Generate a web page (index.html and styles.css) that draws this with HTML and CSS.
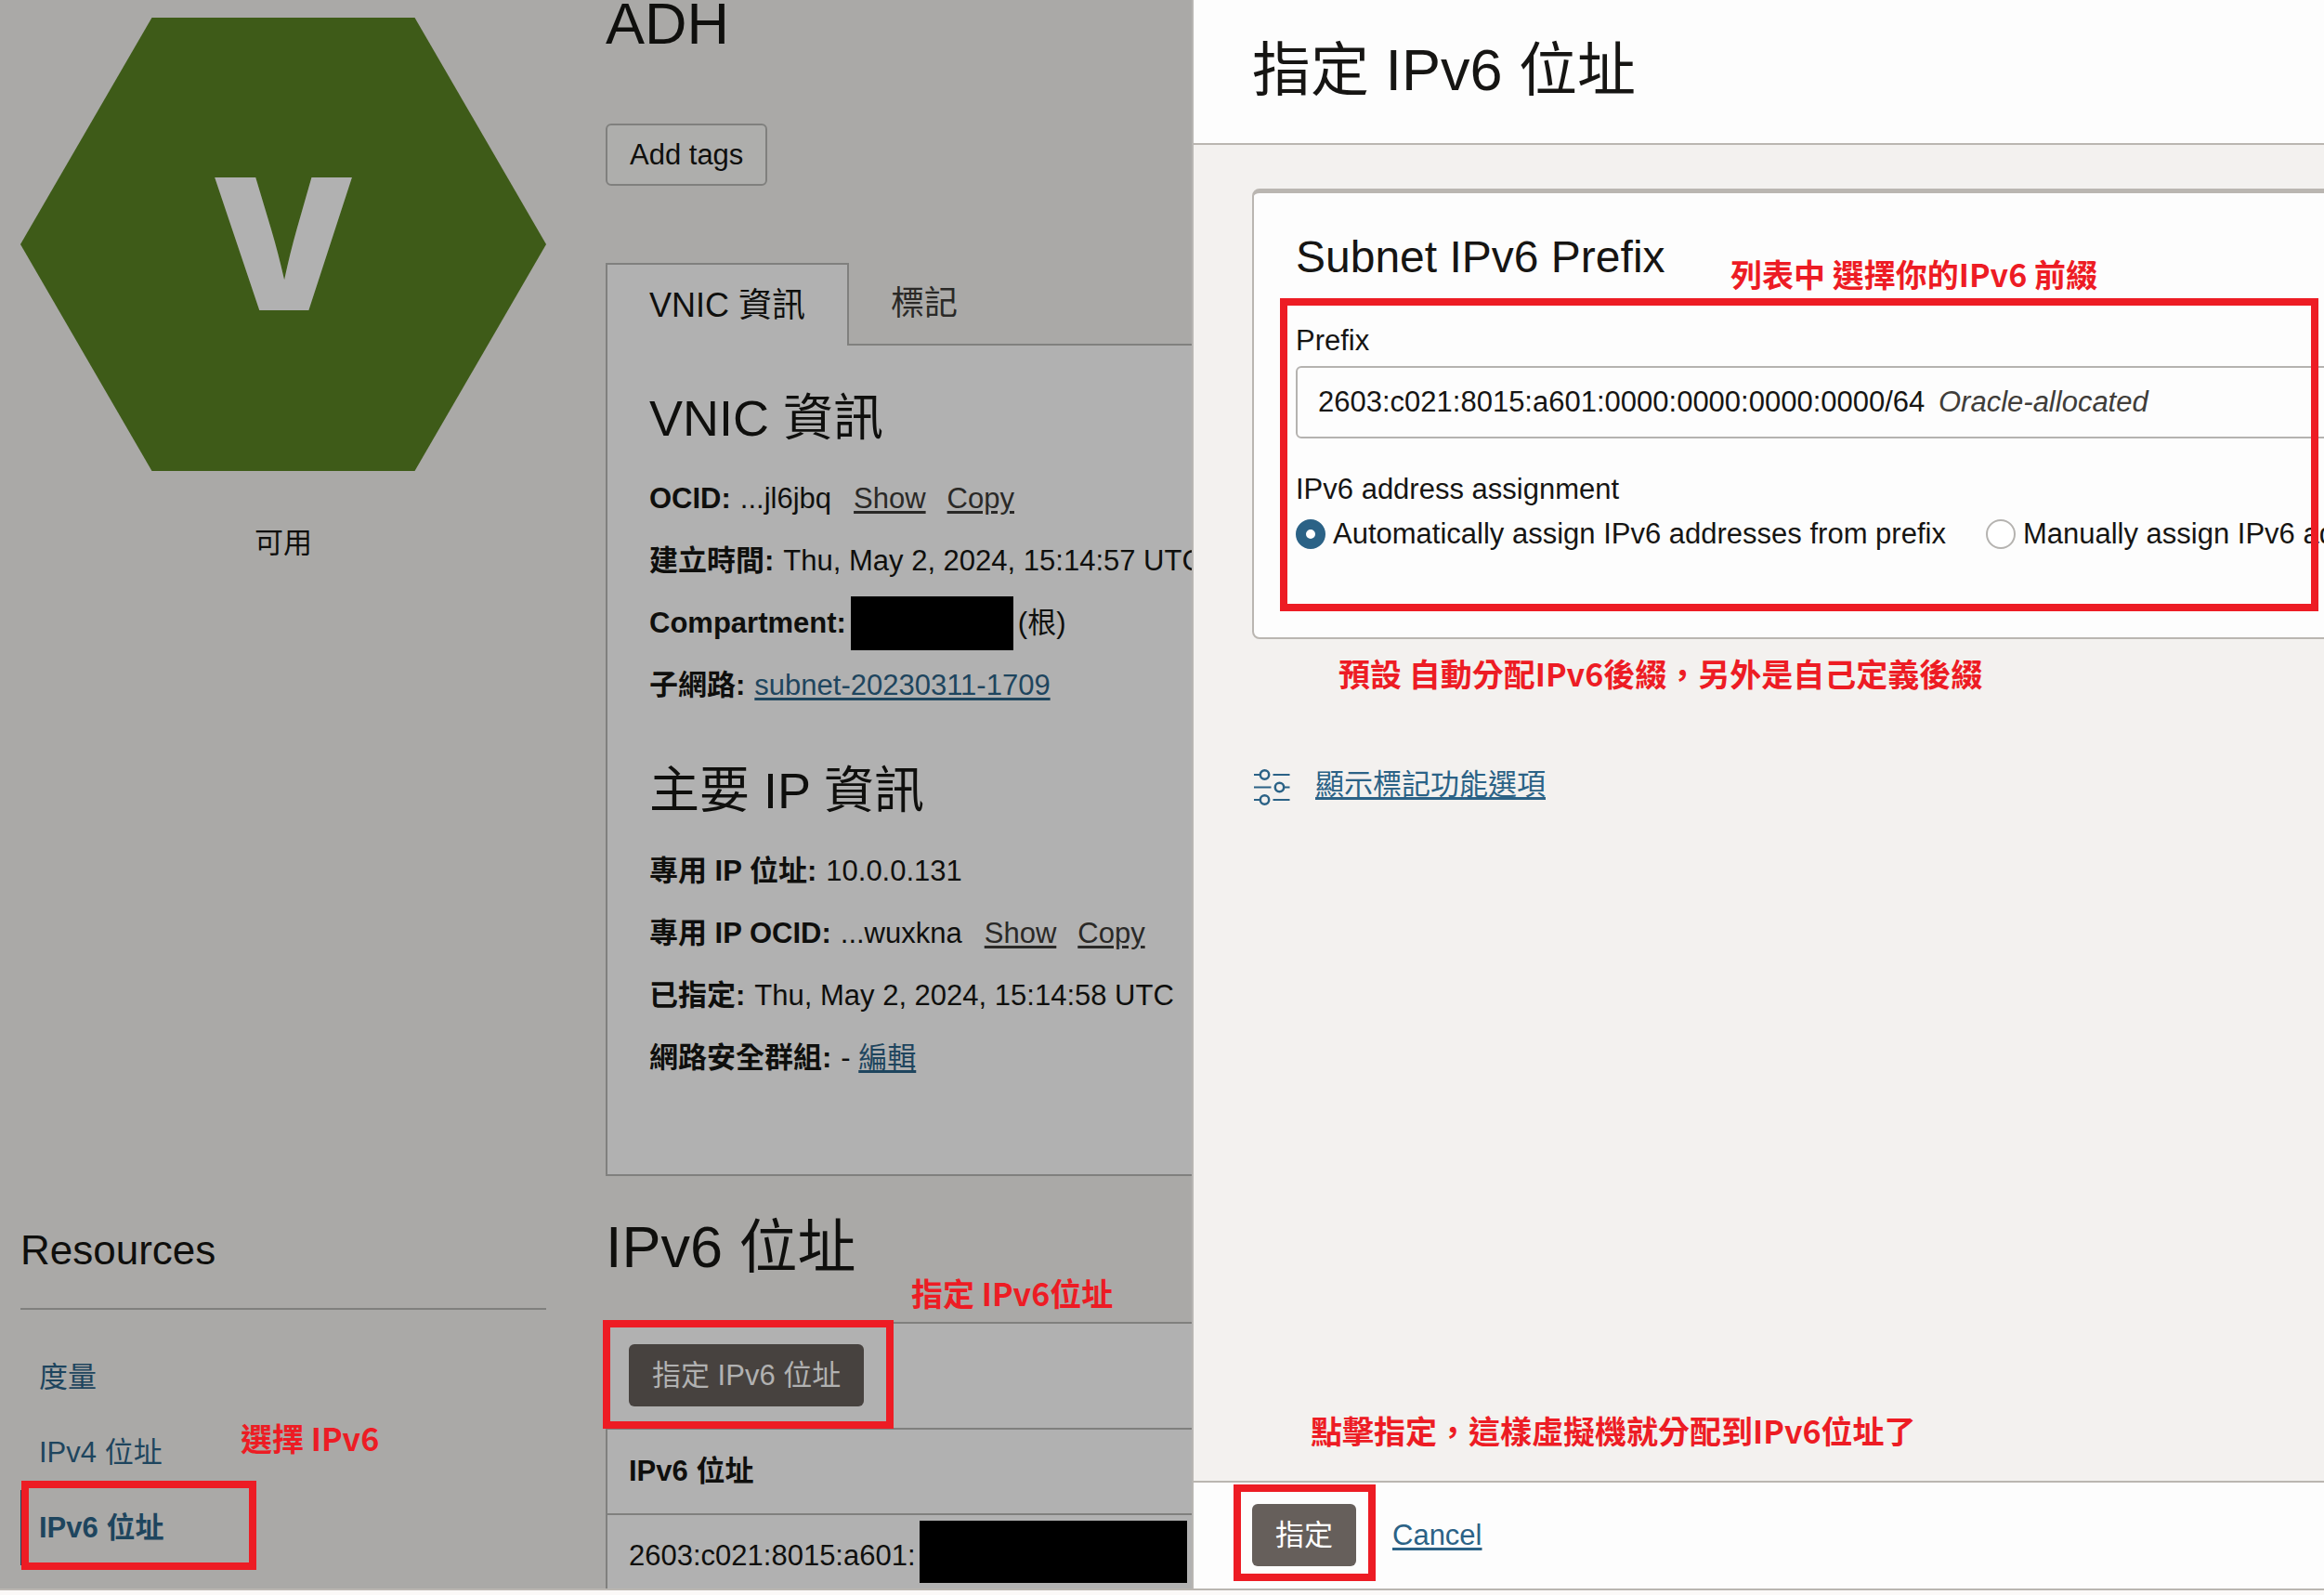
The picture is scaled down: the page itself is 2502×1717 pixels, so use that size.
FILE: index.html
```html
<!DOCTYPE html>
<html lang="zh-Hant">
    <head>
        <meta charset="utf-8">
        <title>指定 IPv6 位址</title>
        <link rel="stylesheet" href="styles.css">
    </head>
    <body>
        <div class="screen">
            <div class="page">
                <aside class="sidebar">
                    <div class="status-icon">V</div>
                    <p class="status-text">可用</p>
                    <h2 class="resources-title">Resources</h2>
                    <nav class="resources">
                        <a href="#metrics">度量</a>
                        <a href="#ipv4">IPv4 位址
                            <span class="note note-side">選擇 IPv6</span>
                        </a>
                        <a href="#ipv6" class="active">IPv6 位址
                            <span class="frame frame-side"></span>
                        </a>
                    </nav>
                </aside>

                <main class="content">
                    <h1 class="title">ADH</h1>
                    <button class="btn-outline">Add tags</button>

                    <div class="tabs">
                        <button class="tab tab-active">VNIC 資訊</button>
                        <button class="tab">標記</button>
                        <div class="tabs-rest"></div>
                    </div>
                    <section class="info">
                        <h2>VNIC 資訊</h2>
                        <dl>
                            <div><dt>OCID:</dt><dd>...jl6jbq</dd><dd class="actions"><a href="#show">Show</a><a href="#copy">Copy</a></dd></div>
                            <div><dt>建立時間:</dt><dd>Thu, May 2, 2024, 15:14:57 UTC</dd></div>
                            <div class="compartment"><dt>Compartment:</dt><dd class="redacted"></dd><dd>(根)</dd></div>
                            <div><dt>子網路:</dt><dd><a href="#subnet" class="link">subnet-20230311-1709</a></dd></div>
                        </dl>
                        <h2>主要 IP 資訊</h2>
                        <dl>
                            <div><dt>專用 IP 位址:</dt><dd>10.0.0.131</dd></div>
                            <div><dt>專用 IP OCID:</dt><dd>...wuxkna</dd><dd class="actions"><a href="#show">Show</a><a href="#copy">Copy</a></dd></div>
                            <div><dt>已指定:</dt><dd>Thu, May 2, 2024, 15:14:58 UTC</dd></div>
                            <div><dt>網路安全群組:</dt><dd>- <a href="#nsg" class="link">編輯</a></dd></div>
                        </dl>
                    </section>

                    <h2 class="list-title">IPv6 位址
                        <span class="note note-list">指定 IPv6位址</span>
                    </h2>
                    <div class="list">
                        <div class="list-bar">
                            <button class="btn-dark btn-dimmed">指定 IPv6 位址</button>
                            <span class="frame frame-list"></span>
                        </div>
                        <table>
                            <thead><tr><th>IPv6 位址</th></tr></thead>
                            <tbody><tr><td><div class="address">2603:c021:8015:a601:<span class="redacted"></span></div></td></tr></tbody>
                        </table>
                    </div>
                </main>
            </div>

            <div class="drawer" role="dialog" aria-labelledby="drawer-title">
                <header class="drawer-head">
                    <h1 id="drawer-title">指定 IPv6 位址</h1>
                </header>

                <div class="drawer-body">
                    <section class="card">
                        <h2>Subnet IPv6 Prefix</h2>
                        <label class="label" for="prefix">Prefix</label>
                        <div class="select-box">
                            <select id="prefix">
                                <option>2603:c021:8015:a601:0000:0000:0000:0000/64</option>
                            </select>
                            <em>Oracle-allocated</em>
                        </div>
                        <fieldset>
                            <legend class="label">IPv6 address assignment</legend>
                            <div class="radios">
                                <input type="radio" name="assign" id="auto" checked>
                                <label for="auto">Automatically assign IPv6 addresses from prefix</label>
                                <input type="radio" name="assign" id="manual">
                                <label for="manual">Manually assign IPv6 addresses from prefix</label>
                            </div>
                        </fieldset>
                    </section>
                    <span class="frame frame-prefix"></span>
                    <span class="note note-prefix">列表中 選擇你的IPv6 前綴</span>
                    <span class="note note-default">預設 自動分配IPv6後綴，另外是自己定義後綴</span>

                    <div class="tag-options">
                        <svg width="42" height="40" viewBox="0 0 42 40" fill="none" stroke="currentColor" stroke-width="2.5">
                            <circle cx="13.5" cy="6" r="4.7"/>
                            <circle cx="29.5" cy="19.5" r="4.7"/>
                            <circle cx="13.5" cy="33" r="4.7"/>
                            <path stroke-width="2" d="M2 6h6M22.500 6h18M2 19.500h18.500M35 19.500h5.500M2 33h6M22.500 33h18"/>
                        </svg>
                        <a href="#tags" class="link">顯示標記功能選項</a>
                    </div>
                    <span class="note note-submit">點擊指定，這樣虛擬機就分配到IPv6位址了</span>
                </div>

                <footer class="drawer-foot">
                    <div class="submit">
                        <button class="btn-dark">指定</button>
                        <span class="frame frame-submit"></span>
                    </div>
                    <a href="#cancel" class="link">Cancel</a>
                </footer>
            </div>
        </div>
    </body>
</html>
```
FILE: styles.css
```css
* {
    box-sizing: border-box;
}
body {
    display: flex;
    flex-direction: column;
    height: 100vh;
    margin: 0;
    padding-bottom: 5px;
    overflow: hidden;
    background-color: #fbf9f8;
    color: #161513;
    font-family: "Liberation Sans", "Noto Sans CJK TC", sans-serif;
    font-size: 31px;
    line-height: 36px;
}
h1, h2, p, dl, dd, fieldset {
    margin: 0;
    padding: 0;
    border: 0;
}
h1, h2 {
    font-weight: normal;
}
button, select {
    font: inherit;
    color: inherit;
}
.link {
    color: #2b6286;
    text-decoration: underline;
    text-decoration-thickness: 3px;
    text-underline-offset: 3px;
}
.screen {
    display: grid;
    grid-template-columns: minmax(0, 1283fr) minmax(0, 1219fr);
    flex: 1;
    min-height: 0;
    border-bottom: 2px solid #bab6b1;
}

/* page behind the drawer */
.page {
    display: flex;
    gap: 64px;
    padding-left: 22px;
    overflow: hidden;
    background-color: #aaa9a7;
    color: #0f0f0d;
}
.page .link {
    color: #1e455e;
}
.sidebar {
    flex: none;
    width: 566px;
    padding-top: 19px;
}
.status-icon {
    display: flex;
    align-items: center;
    justify-content: center;
    height: 488px;
    background-color: #3e5b18;
    clip-path: polygon(25% 0, 75% 0, 100% 50%, 75% 100%, 25% 100%, 0 50%);
    color: #b1b1b1;
    font-family: Inter, sans-serif;
    font-size: 197px;
    font-weight: 900;
}
.status-text {
    margin-top: 58px;
    line-height: 40px;
    text-align: center;
}
.resources-title {
    margin-top: 715px;
    padding-bottom: 36px;
    border-bottom: 2px solid #80807e;
    font-size: 44px;
    line-height: 52px;
}
.resources {
    margin-top: 32px;
}
.resources a {
    display: block;
    position: relative;
    padding-left: 20px;
    color: #1e455e;
    line-height: 81px;
    text-decoration: none;
}
.resources .active {
    padding-left: 16px;
    border-left: 4px solid #1e455e;
    font-weight: bold;
}

.content {
    flex: 1;
    min-width: 0;
    white-space: nowrap;
}
.title {
    font-size: 63px;
    line-height: 50px;
}
.btn-outline {
    display: block;
    height: 67px;
    margin: 83px 0;
    padding: 0 24px;
    border: 2px solid #80807e;
    border-radius: 6px;
    background-color: #aeaeac;
}
.tabs {
    display: flex;
    height: 89px;
}
.tab {
    padding: 0 45px;
    border: 0;
    border-bottom: 2px solid #80807e;
    background: none;
    color: #2a2927;
    font-size: 36px;
    line-height: 84px;
}
.tab-active {
    border: 2px solid #80807e;
    border-bottom: 0;
    background-color: #b1b1b1;
    color: #0f0f0d;
}
.tabs-rest {
    flex: 1;
    border-bottom: 2px solid #80807e;
}
.info {
    padding: 46px 0 92px 45px;
    border: 2px solid #80807e;
    border-width: 0 0 2px 2px;
    background-color: #b1b1b1;
}
.info h2 {
    font-size: 54px;
    line-height: 64px;
}
.info dl {
    margin-top: 21px;
}
.info dl + h2 {
    margin-top: 48px;
}
.info dl div {
    display: flex;
    gap: 10px;
    line-height: 67px;
}
.info dt {
    font-weight: bold;
}
.info .compartment {
    gap: 5px;
    align-items: center;
}
.redacted {
    flex: none;
    width: 175px;
    height: 58px;
    background-color: #000;
}
.actions {
    display: flex;
    gap: 23px;
    margin-left: 14px;
}
.actions a {
    color: #2a2927;
    text-decoration: underline;
    text-decoration-thickness: 3px;
    text-underline-offset: 3px;
}
.list-title {
    position: relative;
    margin: 40px 0 45px;
    font-size: 63px;
    line-height: 72px;
}
.list {
    border: 2px solid #80807e;
    border-width: 2px 0 0 2px;
    background-color: #b1b1b1;
}
.list-bar {
    position: relative;
    padding: 22px 23px 23px;
}
.btn-dark {
    display: block;
    height: 67px;
    padding: 0 25px;
    border: 0;
    border-radius: 6px;
    background-color: #665f5b;
    color: #fff;
}
.btn-dimmed {
    background-color: #47423f;
    color: #b1b1b1;
}
table {
    width: 100%;
    border-collapse: collapse;
}
th, td {
    padding: 0 0 0 23px;
    border-top: 2px solid #80807e;
    line-height: 90px;
    text-align: left;
}
.address {
    display: flex;
    align-items: center;
    gap: 4px;
    height: 88px;
}
.address .redacted {
    width: 288px;
    height: 67px;
    margin-bottom: 10px;
}

/* drawer */
.drawer {
    display: flex;
    flex-direction: column;
    overflow: hidden;
    border-left: 2px solid #b8b6b3;
    background-color: #f3f1ef;
    white-space: nowrap;
}
.drawer-head {
    padding: 39px 63px 43px;
    border-bottom: 2px solid #bab6b1;
    background-color: #fdfdfd;
}
.drawer-head h1 {
    font-size: 63px;
    line-height: 72px;
}
.drawer-body {
    position: relative;
    flex: 1;
    padding: 47px 0 0 63px;
}
/* runs past the right edge of the window */
.card {
    margin-right: -63px;
    padding: 41px 0 93px 45px;
    border: 2px solid #bab6b1;
    border-top-width: 5px;
    border-radius: 8px;
    background-color: #fdfdfd;
}
.card h2 {
    margin-bottom: 44px;
    font-size: 48px;
    line-height: 56px;
}
.label {
    display: block;
    padding: 0;
}
.select-box {
    display: flex;
    align-items: center;
    gap: 14px;
    height: 78px;
    margin: 9px 0 37px;
    padding-left: 22px;
    border: 2px solid #b5b3b0;
    border-radius: 6px;
}
.select-box select {
    padding: 0;
    border: 0;
    background: none;
    appearance: none;
}
.select-box em {
    color: #403d3a;
}
.radios {
    display: flex;
    align-items: center;
    margin-top: 12px;
}
.radios input {
    flex: none;
    width: 32px;
    height: 32px;
    margin: 0 8px 0 0;
    border: 2px solid #b5b3b0;
    border-radius: 50%;
    background-color: #fff;
    appearance: none;
}
.radios input:checked {
    border: 11px solid #2b6286;
}
.radios label {
    margin-right: 43px;
}
.tag-options {
    display: flex;
    gap: 26px;
    margin-top: 140px;
    color: #2b6286;
    line-height: 34px;
}
.drawer-foot {
    display: flex;
    align-items: center;
    gap: 39px;
    padding: 23px 63px 24px;
    border-top: 2px solid #bab6b1;
    background-color: #fdfdfd;
}
.submit {
    position: relative;
}

/* red marks over the screen */
.frame {
    position: absolute;
    border: 8px solid #ed1c24;
    pointer-events: none;
}
.frame-side {
    top: -10px;
    left: -3px;
    width: 253px;
    height: 96px;
}
.frame-list {
    top: -4px;
    left: -5px;
    width: 313px;
    height: 117px;
}
.frame-prefix {
    top: 165px;
    left: 93px;
    right: 6px;
    height: 337px;
}
.frame-submit {
    top: -21px;
    left: -20px;
    right: -21px;
    bottom: -16px;
}
.note {
    position: absolute;
    color: #ed1c24;
    font-family: "Noto Sans CJK TC", sans-serif;
    font-size: 34px;
    font-weight: bold;
    line-height: 40px;
    white-space: nowrap;
}
.note-side {
    top: 5px;
    left: 237px;
}
.note-list {
    top: 66px;
    left: 329px;
}
.note-prefix {
    top: 119px;
    left: 578px;
}
.note-default {
    top: 549px;
    left: 156px;
}
.note-submit {
    left: 126px;
    bottom: 34px;
}
```
